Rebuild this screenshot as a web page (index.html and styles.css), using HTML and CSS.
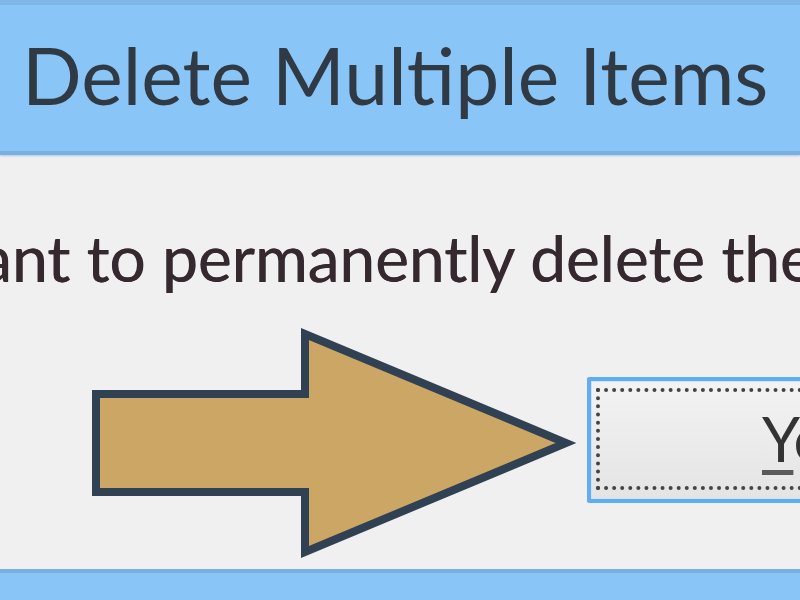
FILE: index.html
```html
<!DOCTYPE html>
<html lang="en">
<head>
<meta charset="utf-8">
<title>Delete Multiple Items</title>
<link rel="stylesheet" href="styles.css">
</head>
<body>
<div class="dialog">
  <div class="top-strip"></div>
  <header class="titlebar">
    <h1 class="title">Delete Multiple Items</h1>
  </header>
  <main class="content">
    <p class="message">ant to permanently delete these</p>
    <div class="actions">
      <svg class="arrow" width="587" height="249" viewBox="0 0 587 249" aria-hidden="true">
        <polygon points="96,74 305,74 305,14 566,123 305,232 305,172 96,172" fill="#cba665" stroke="#2f4153" stroke-width="8" stroke-linejoin="miter" stroke-miterlimit="10"/>
      </svg>
      <button class="btn" type="button"><span class="focus"><span class="label"><u>Y</u>es</span></span></button>
    </div>
  </main>
  <footer class="footer"></footer>
</div>
</body>
</html>
```

FILE: styles.css
```css
html, body {
  margin: 0;
  padding: 0;
}

body {
  width: 800px;
  height: 600px;
  overflow: hidden;
  background: #f0f0f0;
  font-family: Lato, "Open Sans", sans-serif;
}

.dialog {
  display: flex;
  flex-direction: column;
  width: 800px;
  height: 600px;
}

.top-strip {
  height: 5px;
  background: #80b6e8;
  flex-shrink: 0;
}

.titlebar {
  height: 150px;
  flex-shrink: 0;
  box-sizing: border-box;
  background: #8ac5f8;
  border-bottom: 4px solid #79afe1;
  box-shadow: 0 1px 2px rgba(120, 160, 200, 0.5);
  padding: 24px 0 0 22px;
}

.title {
  margin: 0;
  font-size: 78.6px;
  font-weight: 400;
  line-height: 92px;
  color: #303a44;
  white-space: nowrap;
  filter: blur(0.6px);
}

.content {
  display: flex;
  flex-direction: column;
  flex-shrink: 0;
}

.message {
  margin: 68px 0 0 -20px;
  font-size: 64px;
  line-height: 70px;
  color: #35292f;
  white-space: nowrap;
  text-shadow: 0.6px 0 0 #35292f;
  filter: blur(0.6px);
}

.actions {
  display: flex;
  height: 249px;
  margin-top: 27px;
}

.arrow {
  flex-shrink: 0;
  display: block;
  filter: blur(0.5px);
}

.btn {
  flex-shrink: 0;
  align-self: flex-start;
  margin: 57px 0 0 0;
  width: 320px;
  height: 126px;
  padding: 7px 0 9px 5px;
  box-sizing: border-box;
  border: 4px solid #62acf5;
  border-right: none;
  border-radius: 3px 0 0 3px;
  background: linear-gradient(#f3f3f3, #e4e4e4);
  box-shadow: inset 0 0 0 1px #cfe6fb;
  font-family: Lato, "Open Sans", sans-serif;
  display: flex;
}

.focus {
  flex: 1;
  display: flex;
  align-items: center;
  border: 4px dotted #444;
  border-right: none;
  padding-left: 162px;
}

.label {
  font-size: 61px;
  line-height: 1;
  color: #333;
  margin-top: -2px;
  filter: blur(0.5px);
}

.label u {
  text-decoration-thickness: 5px;
  text-underline-offset: 8px;
  text-decoration-color: #5a5a5a;
}

.footer {
  flex: 1;
  background: #8ac5f8;
  border-top: 4px solid #79afe1;
}
```
